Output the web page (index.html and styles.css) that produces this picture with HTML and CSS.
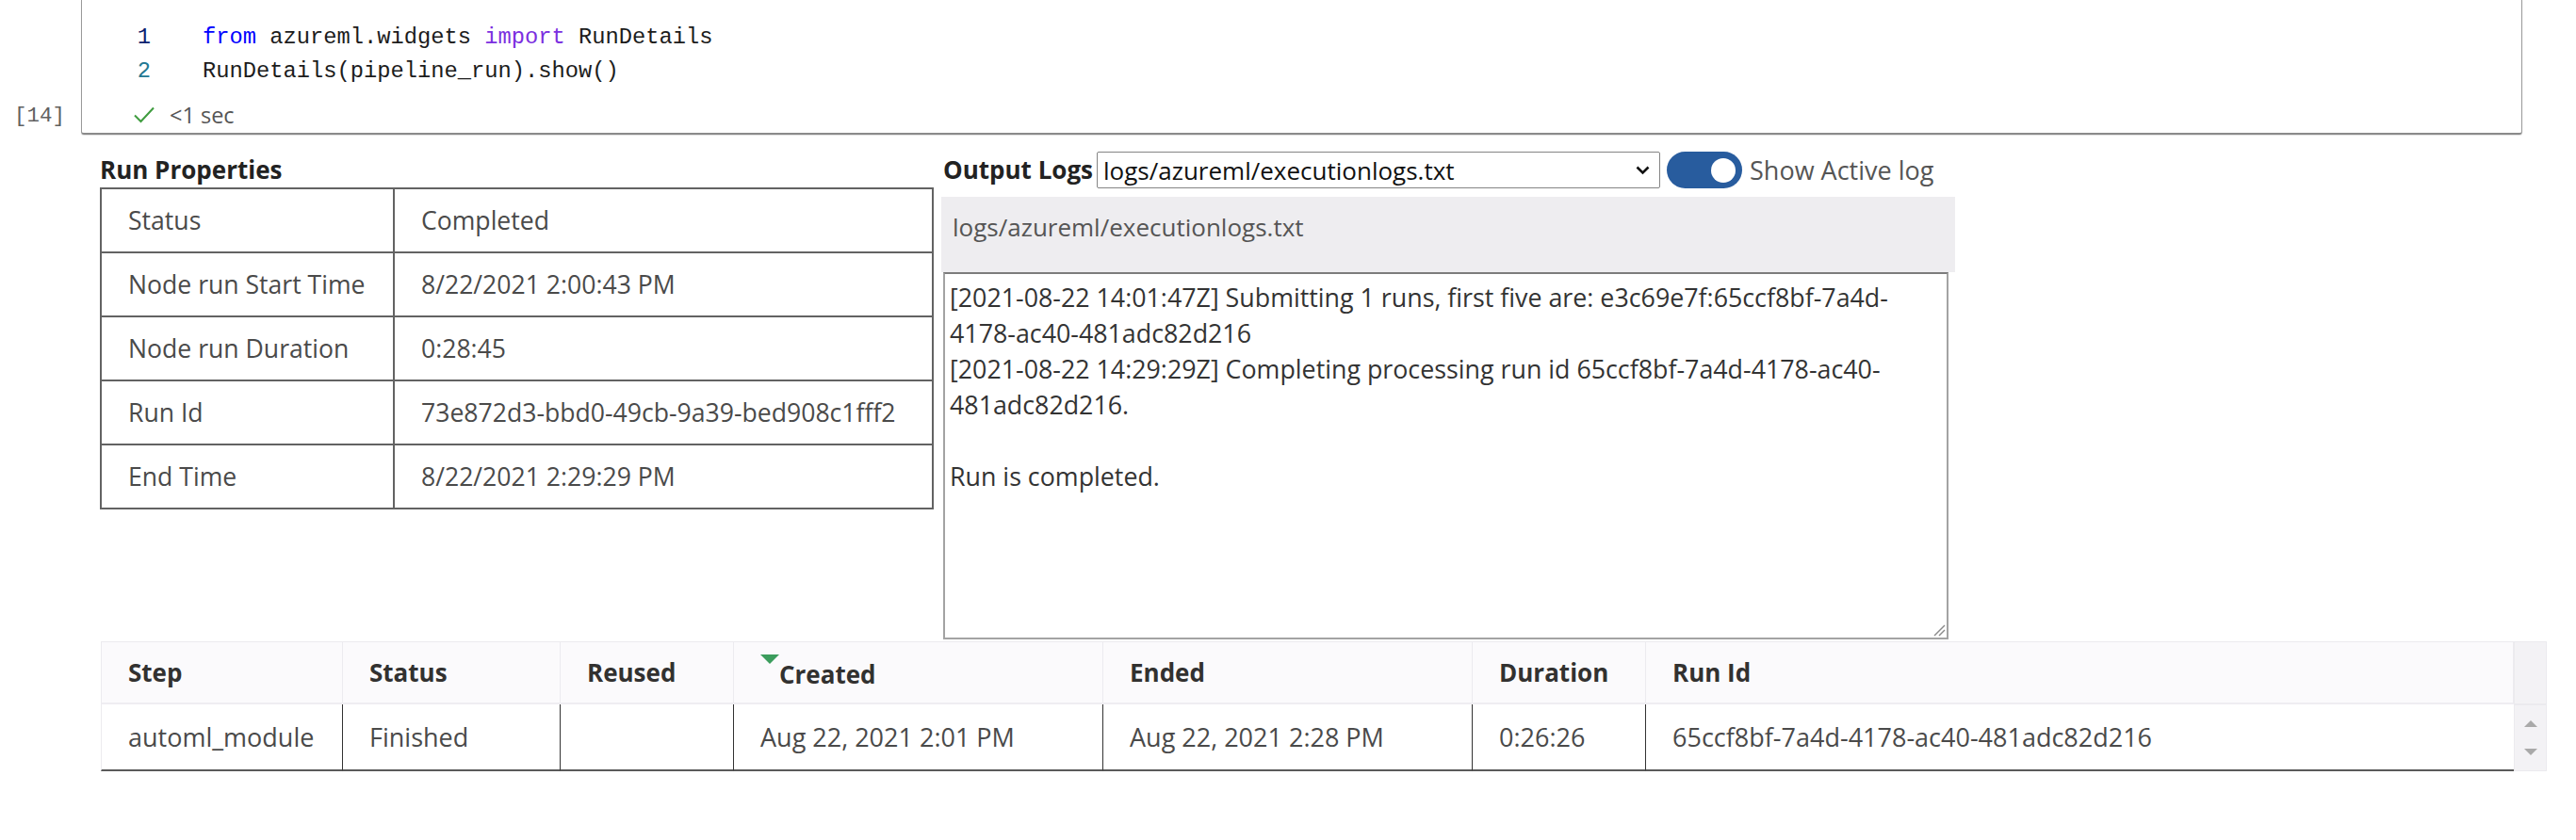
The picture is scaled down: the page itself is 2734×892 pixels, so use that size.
FILE: index.html
```html
<!DOCTYPE html>
<html>
<head>
<meta charset="utf-8">
<title>RunDetails</title>
<link rel="stylesheet" href="styles.css">
</head>
<body>
<div class="cell-row">
  <div class="prompt">[14]</div>
  <div class="cell">
    <div class="code">
      <div class="line"><span class="ln ln-active">1</span><span class="src"><span class="kw">from</span> azureml.widgets <span class="kw-import">import</span> RunDetails</span></div>
      <div class="line"><span class="ln">2</span><span class="src">RunDetails(pipeline_run).show()</span></div>
    </div>
    <div class="status">
      <svg class="check" viewBox="0 0 22 18"><polyline points="1,9.5 7.5,16 21,1.5" fill="none" stroke="#3f9c3f" stroke-width="2"/></svg>
      <span>&lt;1 sec</span>
    </div>
  </div>
</div>

<div class="output">
  <div class="top">
    <div class="props">
      <div class="label">Run Properties</div>
      <table class="ptable">
        <tr><td class="k">Status</td><td class="v">Completed</td></tr>
        <tr><td class="k">Node run Start Time</td><td class="v">8/22/2021 2:00:43 PM</td></tr>
        <tr><td class="k">Node run Duration</td><td class="v">0:28:45</td></tr>
        <tr><td class="k">Run Id</td><td class="v">73e872d3-bbd0-49cb-9a39-bed908c1fff2</td></tr>
        <tr><td class="k">End Time</td><td class="v">8/22/2021 2:29:29 PM</td></tr>
      </table>
    </div>
    <div class="logs">
      <div class="logs-head">
        <span class="label">Output Logs</span>
        <div class="select">
          <span>logs/azureml/executionlogs.txt</span>
          <svg class="chev" viewBox="0 0 15 10"><polyline points="1.5,1.5 7.5,7.5 13.5,1.5" fill="none" stroke="#111" stroke-width="2.6"/></svg>
        </div>
        <div class="toggle"><span class="knob"></span></div>
        <span class="toggle-label">Show Active log</span>
      </div>
      <div class="logname">logs/azureml/executionlogs.txt</div>
      <div class="logbox">
        <div>[2021-08-22 14:01:47Z] Submitting 1 runs, first five are: e3c69e7f:65ccf8bf-7a4d-4178-ac40-481adc82d216</div>
        <div>[2021-08-22 14:29:29Z] Completing processing run id 65ccf8bf-7a4d-4178-ac40-481adc82d216.</div>
        <div>&nbsp;</div>
        <div>Run is completed.</div>
        <svg class="grip" viewBox="0 0 14 14"><line x1="2" y1="13" x2="13" y2="2" stroke="#8a8a8a" stroke-width="1.4"/><line x1="7" y1="13" x2="13" y2="7" stroke="#8a8a8a" stroke-width="1.4"/></svg>
      </div>
    </div>
  </div>

  <div class="steps">
    <table class="stable">
      <colgroup>
        <col style="width:257px"><col style="width:231px"><col style="width:184px"><col style="width:392px"><col style="width:392px"><col style="width:184px"><col style="width:921px">
      </colgroup>
      <thead>
        <tr><th>Step</th><th>Status</th><th>Reused</th><th><span class="sort"></span>Created</th><th>Ended</th><th>Duration</th><th>Run Id</th></tr>
      </thead>
      <tbody>
        <tr><td>automl_module</td><td>Finished</td><td></td><td>Aug 22, 2021 2:01 PM</td><td>Aug 22, 2021 2:28 PM</td><td>0:26:26</td><td class="last">65ccf8bf-7a4d-4178-ac40-481adc82d216</td></tr>
      </tbody>
    </table>
    <div class="scrollbar">
      <div class="sb-head"></div>
      <div class="sb-body">
        <span class="arrow-up"></span>
        <span class="arrow-down"></span>
      </div>
    </div>
  </div>
</div>
</body>
</html>
```

FILE: styles.css
```css
* { box-sizing: border-box; }

body {
  margin: 0;
  width: 2734px;
  background: #ffffff;
  font-family: "Open Sans", "Noto Sans", sans-serif;
  color: #333;
}

/* ---------- code cell ---------- */
.cell-row {
  display: grid;
  grid-template-columns: 86px 2591px;
}

.prompt {
  align-self: end;
  margin-bottom: 6px;
  padding-left: 15px;
  font-family: "Liberation Mono", monospace;
  font-size: 22.5px;
  line-height: 28px;
  color: #616161;
}

.cell {
  border: 1px solid #9a9a9a;
  border-top: none;
  border-bottom: 2px solid #8a8a8a;
  border-radius: 0 0 3px 3px;
  box-shadow: 0 1px 1px rgba(0, 0, 0, 0.12);
  padding: 22px 0 5px 0;
}

.line {
  display: flex;
  height: 36px;
  line-height: 36px;
  font-family: "Liberation Mono", monospace;
  font-size: 23.75px;
  color: #1c1c1c;
  white-space: pre;
}

.ln {
  width: 73px;
  text-align: right;
  color: #237893;
}

.ln-active { color: #0b216f; }

.src { margin-left: 55px; }

.kw { color: #0000ff; }
.kw-import { color: #7b2fe0; }

.status {
  display: flex;
  align-items: center;
  height: 28px;
  margin-top: 14px;
  padding-left: 55px;
  font-size: 23.5px;
  color: #555;
}

.check {
  width: 22px;
  height: 18px;
  margin-right: 16px;
}

/* ---------- output ---------- */
.output {
  padding: 19px 0 0 106px;
}

.top {
  display: flex;
  align-items: flex-start;
  gap: 8px;
}

.label {
  flex: none;
  height: 37px;
  line-height: 37px;
  font-size: 26px;
  font-weight: 700;
  color: #222;
}

.props { width: 885px; }

.ptable {
  table-layout: fixed;
  width: 885px;
  border-collapse: separate;
  border-spacing: 0;
  border-top: 2px solid #636363;
  border-left: 2px solid #636363;
  font-size: 26.6px;
  color: #4a4a4a;
}

.ptable td {
  height: 68px;
  padding: 0 0 0 28px;
  border-right: 2px solid #636363;
  border-bottom: 2px solid #636363;
  white-space: nowrap;
}

.ptable td.k { width: 311px; }
.ptable td.v { width: 572px; }

.logs { width: 1076px; }

.logs-head {
  display: flex;
  align-items: center;
  height: 37px;
}

.logs-head .label { margin-left: 2px; }

.select {
  display: flex;
  align-items: center;
  justify-content: space-between;
  width: 598px;
  height: 39px;
  margin-left: 4px;
  padding: 0 10px 0 6px;
  border: 1px solid #858585;
  border-radius: 2px;
  font-size: 26px;
  color: #111;
}

.chev { width: 15px; height: 10px; }

.toggle {
  display: flex;
  align-items: center;
  justify-content: flex-end;
  width: 80px;
  height: 39px;
  margin-left: 7px;
  padding-right: 7px;
  border-radius: 20px;
  background: #285c9e;
}

.knob {
  width: 26px;
  height: 26px;
  border-radius: 50%;
  background: #fff;
}

.toggle-label {
  margin-left: 8px;
  font-size: 27px;
  color: #555;
}

.logname {
  height: 80px;
  margin-top: 10px;
  padding: 16px 12px 0;
  line-height: 32px;
  font-size: 26px;
  color: #555;
  background: #eeedf0;
}

.logbox {
  position: relative;
  width: 1067px;
  height: 390px;
  margin-left: 2px;
  padding: 6px 5px;
  border: 2px solid #a3a3a3;
  border-top-color: #7c7c7c;
  line-height: 38px;
  font-size: 26.8px;
  color: #333;
}

.grip {
  position: absolute;
  right: 1px;
  bottom: 1px;
  width: 14px;
  height: 14px;
}

/* ---------- steps table ---------- */
.steps {
  display: flex;
  margin-top: 2px;
  margin-left: 1px;
}

.stable {
  table-layout: fixed;
  width: 2561px;
  border-collapse: separate;
  border-spacing: 0;
  font-size: 26px;
}

.stable th {
  height: 67px;
  padding: 0 0 0 28px;
  text-align: left;
  font-weight: 700;
  color: #323130;
  background: #fbfafc;
  border-top: 1px solid #ecebef;
  border-right: 1px solid #ecebef;
  border-bottom: 2px solid #efedf2;
  white-space: nowrap;
}

.stable th:first-child,
.stable td:first-child { border-left: 1px solid #ecebef; }

.stable td {
  height: 69px;
  padding: 0 0 0 28px;
  font-size: 27px;
  color: #4a4a4a;
  border-right: 1px solid #333;
  border-bottom: 2px solid #5a5a5a;
  white-space: nowrap;
}

.stable td.last { border-right: none; }

.sort {
  display: inline-block;
  width: 0;
  height: 0;
  border-left: 10px solid transparent;
  border-right: 10px solid transparent;
  border-top: 10px solid #3c9d5d;
  vertical-align: 21px;
}

.scrollbar {
  display: flex;
  flex-direction: column;
  width: 35px;
  height: 138px;
  background: #f3f2f5;
  border: 1px solid #ebeaee;
}

.sb-head {
  height: 67px;
  border-bottom: 2px solid #ebeaee;
}

.sb-body {
  display: flex;
  flex-direction: column;
  align-items: center;
  gap: 23px;
  padding-top: 16px;
}

.arrow-up,
.arrow-down {
  width: 0;
  height: 0;
  border-left: 7px solid transparent;
  border-right: 7px solid transparent;
}

.arrow-up { border-bottom: 7px solid #a9a9a9; }
.arrow-down { border-top: 7px solid #a9a9a9; }
```
